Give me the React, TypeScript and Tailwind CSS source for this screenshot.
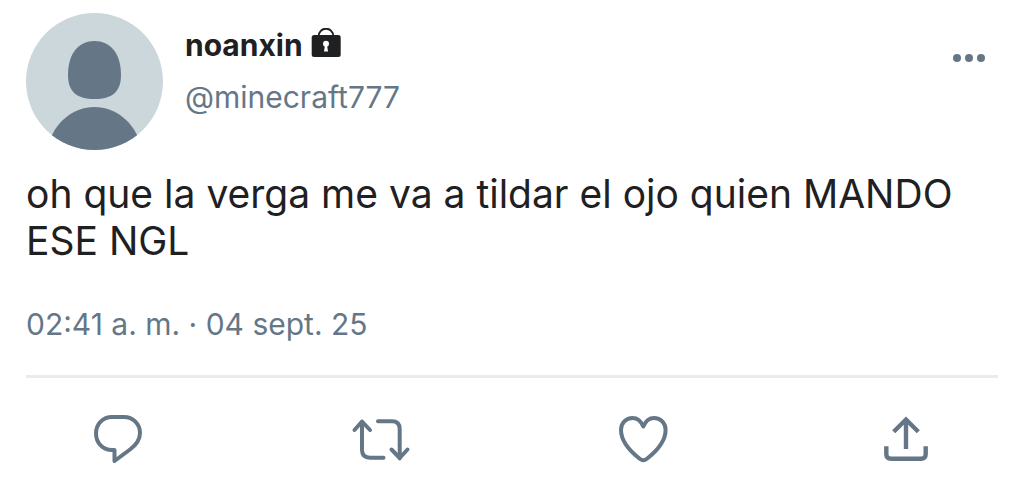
import { ReactNode } from 'react'

interface ActionProps {
  label: string
  children: ReactNode
}

function Action({ label, children }: ActionProps) {
  return (
    <button type="button" aria-label={label}>
      <svg
        viewBox="0 0 60 60"
        className="size-15"
        fill="none"
        stroke="currentColor"
        strokeWidth="4"
      >
        {children}
      </svg>
    </button>
  )
}

function Avatar() {
  return (
    <svg viewBox="0 0 137 137" className="size-[137px] shrink-0">
      <clipPath id="avatar">
        <circle cx="68.5" cy="68.5" r="68.5" />
      </clipPath>
      <g clipPath="url(#avatar)">
        <path d="M0 0h137v137H0z" fill="#ccd7dc" />
        <path
          d="M68.5 28C84 28 95 40 95 62C95 79 86 86 68.5 86C51 86 42 79 42 62C42 40 53 28 68.5 28Z"
          fill="#657786"
        />
        <path
          d="M22 132C29 109 47 94 68.5 94S108 109 115 132V137H22Z"
          fill="#657786"
        />
      </g>
    </svg>
  )
}

function Lock() {
  return (
    <svg viewBox="0 0 30 30" className="mb-1 size-[30px]">
      <path
        d="M7.7 9V8a7.3 7.3 0 0 1 14.6 0v1"
        fill="none"
        stroke="currentColor"
        strokeWidth="2"
      />
      <rect x="0.7" y="7" width="29" height="22" rx="2.5" fill="currentColor" />
      <circle cx="15" cy="15.7" r="3" fill="white" />
      <path d="M14 17h2l1 6.5h-4z" fill="white" />
    </svg>
  )
}

export default function App() {
  return (
    <article className="bg-white px-[26px] pt-[13px] font-['Inter',sans-serif] text-[#1f2022]">
      <header className="flex items-start">
        <Avatar />
        <div className="ml-[22px] flex-1 pt-3">
          <div className="flex items-center gap-2">
            <h1 className="text-[30px] leading-10 font-bold">noanxin</h1>
            <Lock />
          </div>
          <p className="mt-3 text-[30px] leading-10 text-[#657786]">
            @minecraft777
          </p>
        </div>
        <button
          type="button"
          aria-label="Más opciones"
          className="mt-10 mr-3 text-[#657786]"
        >
          <svg viewBox="0 0 34 10" className="h-[10px] w-[34px]" fill="currentColor">
            <circle cx="5" cy="5" r="4" />
            <circle cx="17" cy="5" r="4" />
            <circle cx="29" cy="5" r="4" />
          </svg>
        </button>
      </header>

      <p className="mt-5 text-[39px] leading-[47px]">
        oh que la verga me va a tildar el ojo quien MANDO ESE NGL
      </p>

      <time
        dateTime="2025-09-04T02:41"
        className="mt-10 block text-[30px] leading-10 text-[#657786]"
      >
        02:41 a. m. · 04 sept. 25
      </time>

      <footer className="mt-[31px] flex justify-between border-t-3 border-[#ebebeb] px-[62px] pt-8 text-[#657786]">
        <Action label="Responder">
          <path
            d="M24 7H36C45 7 52 14 52 23C52 30 48 35 42 39.5L26.5 51V40H24C15 40 8 33 8 23.5C8 14 15 7 24 7Z"
            strokeLinejoin="round"
          />
        </Action>
        <Action label="Retwittear">
          <path
            d="M3.5 20L11 11.5L19 20M11 11.5V40Q11 47.7 19 47.7H32.5M27 11.3H41Q48.7 11.3 48.7 19V48.5M40.5 39.5L48.7 48L56.5 39.5"
            strokeLinecap="round"
            strokeLinejoin="round"
          />
        </Action>
        <Action label="Me gusta">
          <path
            d="M30.3 16.5C28 11 24 8 19.5 8C13 8 8 13 8 20C8 32 18 42 27 49Q30.3 51.5 33.6 49C42.6 42 52.6 32 52.6 20C52.6 13 47.6 8 41 8C36.6 8 32.6 11 30.3 16.5Z"
            strokeLinejoin="round"
          />
        </Action>
        <Action label="Compartir">
          <path
            d="M10.3 36.3V44Q10.3 48.7 15 48.7H45Q49.7 48.7 49.7 44V36.3M30 39V10M17.7 21.8L30 9.5L42.3 21.8"
            strokeWidth="4.4"
          />
        </Action>
      </footer>
    </article>
  )
}
